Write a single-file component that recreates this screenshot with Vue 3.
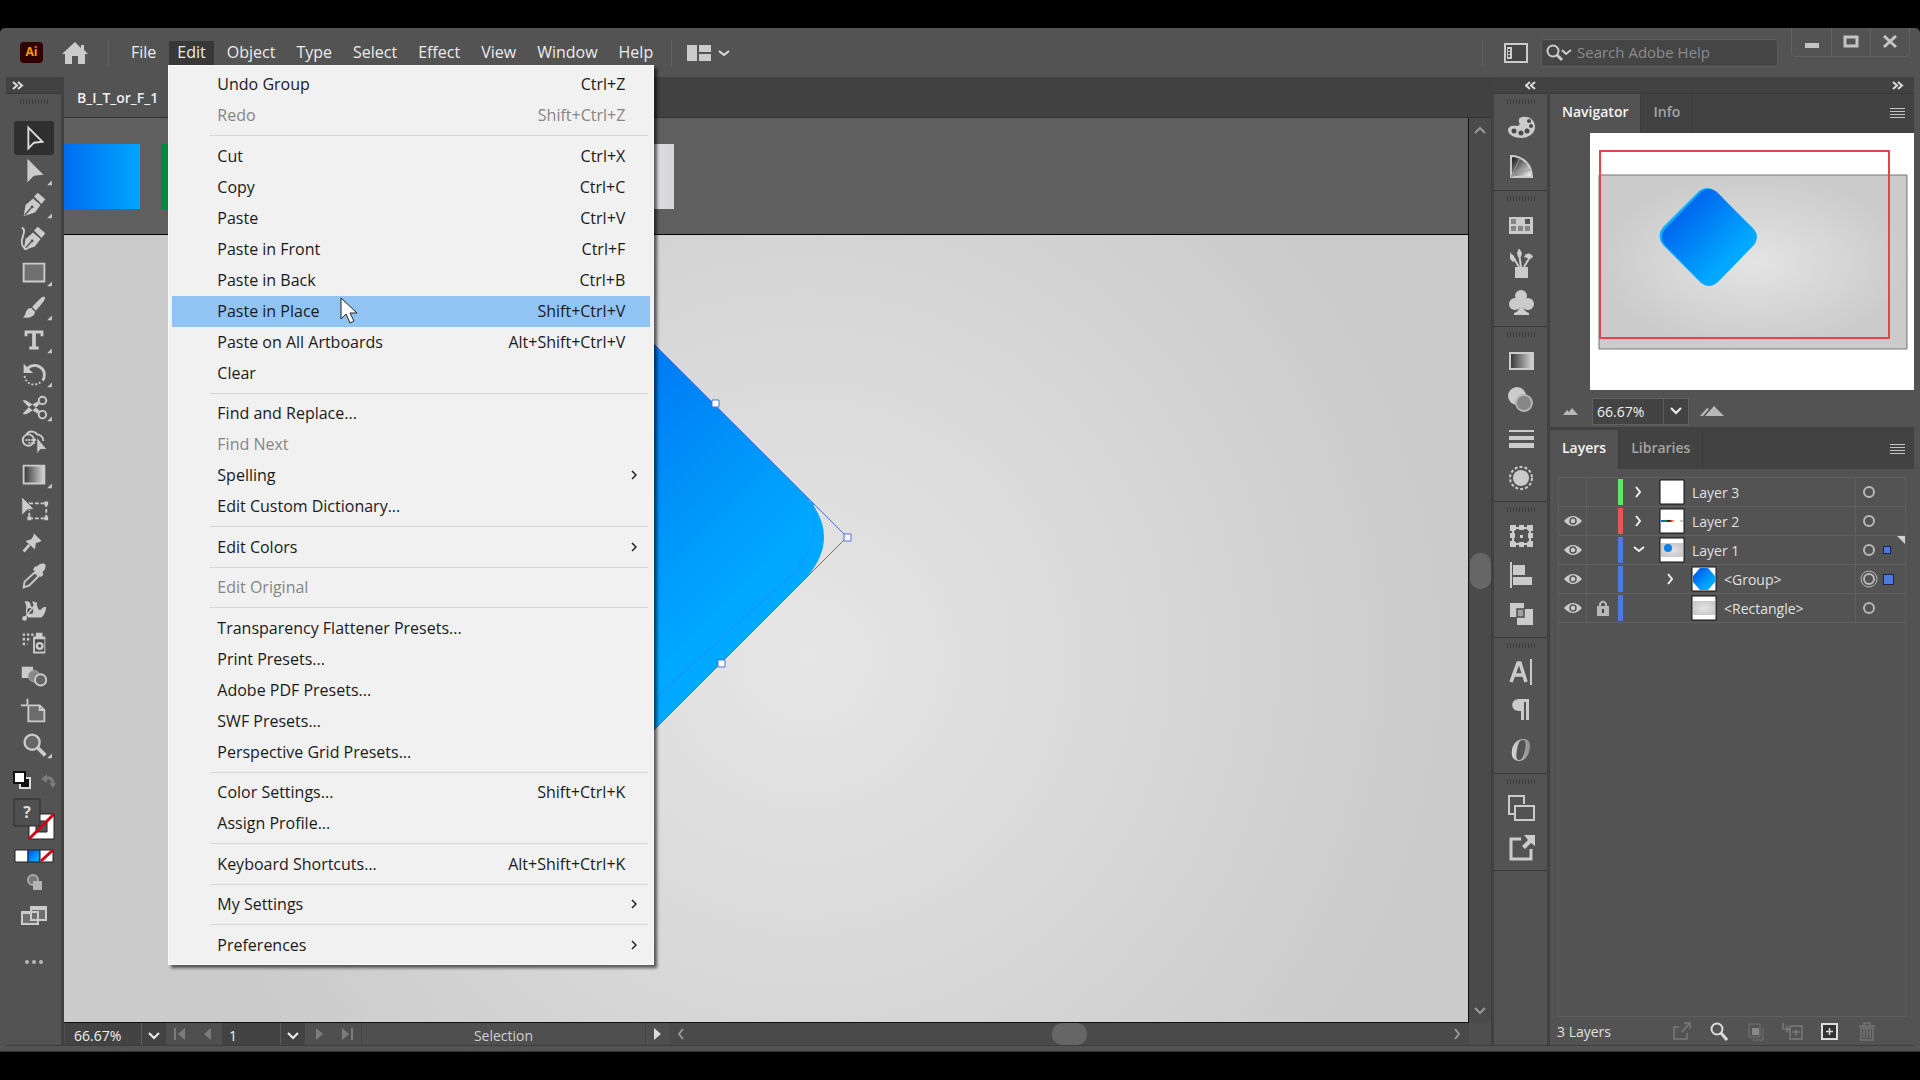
<script setup>
import { ref } from "vue";

const search = ref("");
const zoom = ref("66.67%");
const artboard = ref("1");
const activeItem = ref("Paste in Place");

const menus = ["File", "Edit", "Object", "Type", "Select", "Effect", "View", "Window", "Help"];

const editMenu = [
  { label: "Undo Group", keys: "Ctrl+Z" },
  { label: "Redo", keys: "Shift+Ctrl+Z", disabled: true },
  { divider: true },
  { label: "Cut", keys: "Ctrl+X" },
  { label: "Copy", keys: "Ctrl+C" },
  { label: "Paste", keys: "Ctrl+V" },
  { label: "Paste in Front", keys: "Ctrl+F" },
  { label: "Paste in Back", keys: "Ctrl+B" },
  { label: "Paste in Place", keys: "Shift+Ctrl+V" },
  { label: "Paste on All Artboards", keys: "Alt+Shift+Ctrl+V" },
  { label: "Clear" },
  { divider: true },
  { label: "Find and Replace..." },
  { label: "Find Next", disabled: true },
  { label: "Spelling", sub: true },
  { label: "Edit Custom Dictionary..." },
  { divider: true },
  { label: "Edit Colors", sub: true },
  { divider: true },
  { label: "Edit Original", disabled: true },
  { divider: true },
  { label: "Transparency Flattener Presets..." },
  { label: "Print Presets..." },
  { label: "Adobe PDF Presets..." },
  { label: "SWF Presets..." },
  { label: "Perspective Grid Presets..." },
  { divider: true },
  { label: "Color Settings...", keys: "Shift+Ctrl+K" },
  { label: "Assign Profile..." },
  { divider: true },
  { label: "Keyboard Shortcuts...", keys: "Alt+Shift+Ctrl+K" },
  { divider: true },
  { label: "My Settings", sub: true },
  { divider: true },
  { label: "Preferences", sub: true },
];

const nib =
  '<path d="M9 29l2-12 8-7 8 7-6 8z"/><path d="M20 8l4-4 8 7-4 5z"/><path d="M10 28l7-8" stroke="#535353" stroke-width="1.5"/><circle cx="18" cy="19" r="1.5" fill="#535353"/>';

// 40 x 34 drawings, flyout marks the tools that have hidden siblings
const tools = [
  { name: "Selection", svg: '<path d="M14 6l15 15-9 1-6 6z" fill="none" stroke="#dcdcdc" stroke-width="2"/>' },
  { name: "Direct Selection", flyout: true, svg: '<path d="M13 3l17 17-10 1-7 7z"/>' },
  { name: "Pen", flyout: true, svg: nib },
  { name: "Curvature", svg: nib + '<path d="M7 5c5 2 1 8 0 14 0 5 1 8 6 9" fill="none" stroke="#cbcbcb" stroke-width="2"/>' },
  { name: "Rectangle", flyout: true, svg: '<path d="M9 7h22v19H9z" fill="#707070" stroke="#cbcbcb" stroke-width="2"/>' },
  { name: "Paintbrush", flyout: true, svg: '<path d="M31 6c2 1 0 5-9 15l-4-4C26 8 30 5 31 6z"/><path d="M17 18l4 4c0 6-8 7-13 6 4-1 2-10 9-10z"/>' },
  { name: "Type", flyout: true, svg: '<path d="M10 7h20v6h-3v-3h-5v14h3v3H15v-3h3V10h-5v3h-3z"/>' },
  { name: "Rotate", flyout: true, svg: '<path d="M13 11c8-7 18-1 18 7 0 3-1 5-2 6" fill="none" stroke="#cbcbcb" stroke-width="3"/><path d="M9 6v10h10z"/><path d="M10 19c1 9 11 12 18 6" fill="none" stroke="#cbcbcb" stroke-width="2" stroke-dasharray="2 2"/>' },
  { name: "Scissors", flyout: true, svg: '<g fill="none" stroke="#cbcbcb" stroke-width="2"><circle cx="29" cy="9" r="4"/><circle cx="29" cy="24" r="4"/></g><path d="M8 9c3-1 6 0 18 11l-2 3C17 19 12 14 8 9zM8 23c3 2 7 0 18-10l-2-3C17 13 12 18 8 23z"/>' },
  { name: "Shape Builder", svg: '<g fill="none" stroke="#cbcbcb" stroke-width="2"><circle cx="14" cy="16" r="6"/><path d="M12 10c3-5 10-3 11 0 4 0 7 3 7 7"/></g><path d="M11 16h12M14 19h7" stroke="#cbcbcb" stroke-width="2" stroke-dasharray="2 1"/><path d="M23 13l11 13-7 0-4 5z" stroke="#535353" stroke-width="1"/>' },
  { name: "Gradient", flyout: true, svg: '<path d="M9 7h22v19H9z" fill="url(#tool-grad)" stroke="#cbcbcb" stroke-width="2"/>' },
  { name: "Free Transform", svg: '<path d="M15 11h18v16H15z" fill="none" stroke="#cbcbcb" stroke-width="2" stroke-dasharray="4 2"/><path d="M7 4l13 13-7 1-6 6z" stroke="#535353" stroke-width="1"/><path d="M13 25h4v4h-4zM31 25h4v4h-4zM31 9h4v4h-4z"/>' },
  { name: "Puppet Warp", svg: '<path d="M20 7l8 8-2 1-4 1-1 7-10-9 6-2 2-3z"/><path d="M15 19l-6 7" stroke="#cbcbcb" stroke-width="3"/>' },
  { name: "Eyedropper", svg: '<path d="M23 7c3-4 8-4 9-2s0 5-3 8l1 3-3 2-8-8 2-3z"/><path d="M21 13l4 4-10 10-6 2 1-6z" fill="#535353" stroke="#cbcbcb" stroke-width="2"/>' },
  { name: "Puppet", svg: '<path d="M10 8c8-2 6 6 8 9 2 4 3-4 0-9 6-1 5 8 8 9 3 0 2-4 7-3-1 6-2 8-5 11H14c-4-4 0-10-4-17z"/><circle cx="16" cy="18" r="4" fill="#535353" stroke="#cbcbcb" stroke-width="1.5"/><path d="M9 27L23 9" stroke="#cbcbcb" stroke-width="1.5"/><circle cx="10" cy="26" r="2.5"/>' },
  { name: "Symbol Sprayer", svg: '<path d="M22 5h7v4h3v18H19V9h3z"/><path d="M21 12h10v13H21z" fill="#4a4a4a"/><circle cx="26" cy="19" r="3" fill="none" stroke="#cbcbcb" stroke-width="2.5"/><path d="M8 7h12M8 12h9M8 17h5" stroke="#cbcbcb" stroke-width="2.5" stroke-dasharray="2.5 2"/>' },
  { name: "Blend", svg: '<path d="M7 5h12v12H7z"/><circle cx="20" cy="15" r="6" fill="#888" stroke="#a8a8a8" stroke-width="1"/><circle cx="27" cy="19" r="6" fill="#666" stroke="#cbcbcb" stroke-width="2"/>' },
  { name: "Artboard", svg: '<path d="M14 11h12l5 5v12H14z" fill="#6c6c6c" stroke="#cbcbcb" stroke-width="2"/><path d="M26 11v5h5M6 11h7M13 4v6" fill="none" stroke="#cbcbcb" stroke-width="2"/>' },
  { name: "Zoom", flyout: true, svg: '<circle cx="18" cy="14" r="8" fill="#666" stroke="#cbcbcb" stroke-width="2.5"/><path d="M24 20l8 8" stroke="#cbcbcb" stroke-width="4"/>' },
];

// 30 x 30 drawings of the collapsed panels
const dock = [
  [
    { name: "Color", svg: '<path d="M17 4c7-1 12 4 12 10S23 25 15 25C7 25 2 21 2 17s5-5 9-4c3 0 3-2 2-4-1-3 1-5 4-5z"/><g fill="#4a4a4a"><circle cx="8" cy="18" r="2.5"/><circle cx="15" cy="20" r="2.5"/><circle cx="21" cy="18" r="2.5"/><circle cx="25" cy="13" r="2"/><circle cx="23" cy="8" r="2"/></g>' },
    { name: "Color Guide", svg: '<path d="M5 4c12 0 21 9 21 21H5z" fill="url(#guide-grad)" stroke="#cbcbcb" stroke-width="2"/><path d="M5 25L14 6M5 25L21 11M5 25L26 17" stroke="#999" stroke-width="1"/>' },
  ],
  [
    { name: "Swatches", svg: '<path d="M3 7h24v17H3z"/><g fill="#868686"><path d="M5 9h5v5H5zM5 16h5v5H5zM12 16h5v5h-5zM19 16h5v5h-5z"/><path d="M19 9h5v5h-5z" fill="#555"/></g>' },
    { name: "Brushes", svg: '<path d="M9 18h13v11H9z"/><path d="M6 6l7 12M13 4l2 14M24 8l-6 10" stroke="#cbcbcb" stroke-width="2"/><path d="M4 3l6 8-3 2-3-3zM11 4l2-5 3 5-1 4h-3zM18 8c2-5 8-4 9 0l-3 2z"/>' },
    { name: "Symbols", svg: '<circle cx="15" cy="8" r="6"/><circle cx="9" cy="16" r="6"/><circle cx="22" cy="16" r="6"/><path d="M14 12h3c0 7 0 11 6 13v2H8v-2c6-2 6-6 6-13z"/>' },
  ],
  [
    { name: "Gradient", svg: '<path d="M4 7h23v16H4z" fill="url(#tool-grad)" stroke="#cbcbcb" stroke-width="2"/>' },
    { name: "Transparency", svg: '<circle cx="11" cy="11" r="9"/><circle cx="18" cy="18" r="8" fill="#868686" stroke="#b4b4b4" stroke-width="2"/>' },
    { name: "Stroke", svg: '<path d="M3 6h25v2H3zM3 12h25v4H3zM3 19h25v5H3z"/>' },
    { name: "Appearance", svg: '<circle cx="15" cy="15" r="8"/><circle cx="15" cy="15" r="11" fill="none" stroke="#cbcbcb" stroke-width="2" stroke-dasharray="3 2"/>' },
  ],
  [
    { name: "Transform", svg: '<path d="M7 7h17v16H7z" fill="none" stroke="#cbcbcb" stroke-width="2"/><path d="M4 4h6v6H4zM13 4h5v6h-5zM21 4h6v6h-6zM4 12h6v5H4zM21 12h6v5h-6zM4 20h6v6H4zM13 20h5v6h-5zM21 20h6v6h-6z"/><path d="M9 9h13v12H9z" fill="#535353"/><path d="M14 14h3v3h-3z"/>' },
    { name: "Align", svg: '<path d="M4 2h2v26H4zM7 5h12v10H7zM7 17h19v8H7z"/>' },
    { name: "Pathfinder", svg: '<path d="M4 4h14v14H4zM11 10h16v16H11z"/><path d="M11 10h7v8h-7z" fill="#a0a0a0" stroke="#4d4d4d" stroke-width="1.5"/>' },
  ],
  [
    { name: "Character", svg: '<path d="M5 25l7-19h2l6 19M9 18h9" fill="none" stroke="#cbcbcb" stroke-width="3.5"/><path d="M24 2h2v26h-2z"/>' },
    { name: "Paragraph", svg: '<path d="M22 3H13c-9 0-9 12 0 12h2v9h3V6h2v18h3V3z"/>' },
    { name: "OpenType", svg: '<path fill-rule="evenodd" d="M17 4c6 0 8 4 7 10s-5 12-11 12-8-5-7-11S11 4 17 4zm0 1c-4 0-5 5-6 10s-1 10 2 10 5-5 6-10 1-10-2-10z" fill="url(#o-grad)"/>' },
  ],
  [
    { name: "Artboards", svg: '<g fill="none" stroke="#cbcbcb" stroke-width="2"><path d="M8 21H3V3h15v8"/><path d="M9 13h19v14H9z"/></g>' },
    { name: "Asset Export", svg: '<path d="M15 7H5v20h20V17" fill="none" stroke="#cbcbcb" stroke-width="3"/><path d="M18 3h11v11l-4-3-6 6-3-3 6-6z"/>' },
  ],
];

const layers = ref([
  { name: "Layer 3", color: "green", art: "blank", arrow: "right" },
  { name: "Layer 2", color: "red", art: "swatches", arrow: "right", visible: true },
  { name: "Layer 1", color: "blue", art: "page", arrow: "down", visible: true, mark: true },
  { name: "<Group>", color: "blue", art: "group", arrow: "right", visible: true, child: true, selected: true },
  { name: "<Rectangle>", color: "blue", art: "rect", visible: true, child: true, locked: true },
]);

const layerActions = [
  { name: "Collect for export", svg: '<path d="M8 7H3v12h13v-6M11 12l7-8M13 3h6v6" fill="none" stroke="#7a7a7a" stroke-width="1.5"/>' },
  { name: "Locate object", svg: '<circle cx="9" cy="9" r="5.5" fill="none" stroke="#dcdcdc" stroke-width="2"/><path d="M13 13l6 7" stroke="#dcdcdc" stroke-width="3"/>' },
  { name: "Make clipping mask", svg: '<path d="M4 4h11v13H4zM8 20h10V8" fill="none" stroke="#747474" stroke-width="1"/><path d="M7 8h7v7H7z" fill="#8a8a8a"/>' },
  { name: "Create new sublayer", svg: '<path d="M8 6h12v13H8zM14 9v7M10 12h8M1 3v6h5M4 6l3 3-3 3" fill="none" stroke="#7a7a7a" stroke-width="1.5"/>' },
  { name: "Create new layer", svg: '<path d="M3 4h15v15H3z" fill="#333" stroke="#dcdcdc" stroke-width="2"/><path d="M10.5 8v7M7 11.5h7" stroke="#dcdcdc" stroke-width="1.5"/>' },
  { name: "Delete", svg: '<path d="M3 6h16M8 6V3h6v3M5 8h12v12H5zM8 9v9M11 9v9M14 9v9" fill="none" stroke="#747474" stroke-width="1.5"/>' },
];

const toggleLayer = (layer) => {
  layer.visible = !layer.visible;
};
</script>

<template>
  <div class="screen">
    <svg class="defs" width="0" height="0" aria-hidden="true">
      <defs>
        <linearGradient id="tool-grad"><stop offset="0" stop-color="#333" /><stop offset="1" stop-color="#d8d8d8" /></linearGradient>
        <linearGradient id="guide-grad" x1="0" y1="0" x2="1" y2="1"><stop offset="0.1" stop-color="#222" /><stop offset="1" stop-color="#fff" /></linearGradient>
        <linearGradient id="o-grad"><stop offset="0" stop-color="#d8d8d8" /><stop offset="1" stop-color="#8a8a8a" /></linearGradient>
        <linearGradient id="blue-grad" x1="0" y1="0" x2="1" y2="1"><stop offset="0.2" stop-color="#0064ee" /><stop offset="0.72" stop-color="#00a8ff" /></linearGradient>
        <radialGradient id="page-grad"><stop offset="0" stop-color="#e4e4e4" /><stop offset="1" stop-color="#cbcbcb" /></radialGradient>
      </defs>
    </svg>

    <div class="app">
      <header class="top-bar">
        <span class="logo">Ai</span>
        <button class="home" aria-label="Home">
          <svg width="28" height="24" viewBox="0 0 28 24"><path d="M14 1L1 13h3v10h7v-8h6v8h7V13h3l-4-4V4h-3v3z" fill="#cbcbcb" /></svg>
        </button>
        <span class="bar-line"></span>
        <nav class="menus">
          <div v-for="menu in menus" :key="menu" class="menu-holder">
            <button class="menu-button" :class="{ open: menu === 'Edit' }">{{ menu }}</button>
            <div v-if="menu === 'Edit'" class="menu" role="menu">
              <template v-for="(item, index) in editMenu" :key="index">
                <hr v-if="item.divider" class="divider" />
                <button
                  v-else
                  class="menu-item"
                  role="menuitem"
                  :class="{ active: item.label === activeItem }"
                  :disabled="item.disabled"
                  @mouseenter="activeItem = item.label"
                >
                  <span>{{ item.label }}</span>
                  <span v-if="item.keys" class="keys">{{ item.keys }}</span>
                  <svg v-if="item.sub" class="sub-arrow" width="6" height="10" viewBox="0 0 6 10"><path d="M1 1l4 4-4 4" fill="none" stroke="#222" stroke-width="1.5" /></svg>
                  <svg v-if="item.label === activeItem" class="cursor" width="18" height="27" viewBox="0 0 18 27">
                    <path d="M1 1v21l5-5 4 9 4-2-4-8h7z" fill="#fff" stroke="#222" stroke-width="1" />
                  </svg>
                </button>
              </template>
            </div>
          </div>
        </nav>
        <span class="bar-line"></span>
        <button class="workspace" aria-label="Arrange documents">
          <svg width="44" height="20" viewBox="0 0 44 20">
            <path d="M1 2h10v16H1zM13 2h12v7H13zM13 11h12v7H13z" fill="#cbcbcb" />
            <path d="M37 8l5 4 5-4" transform="translate(-4 0)" fill="none" stroke="#dcdcdc" stroke-width="2" />
          </svg>
        </button>
        <span class="spacer"></span>
        <span class="bar-line"></span>
        <button class="switcher" aria-label="Workspace switcher">
          <svg width="24" height="20" viewBox="0 0 24 20"><path d="M1 1h22v18H1z" fill="#454545" stroke="#cbcbcb" stroke-width="2" /><path d="M3 4h5v12H3z" fill="#cbcbcb" /><path d="M5 6v9" stroke="#444" stroke-width="2" stroke-dasharray="2 1" /></svg>
        </button>
        <label class="search">
          <svg width="28" height="20" viewBox="0 0 28 20"><circle cx="8" cy="8" r="5.5" fill="none" stroke="#cbcbcb" stroke-width="2" /><path d="M12 12l5 5" stroke="#cbcbcb" stroke-width="3" /><path d="M17 7l4 4 5-4" fill="none" stroke="#cbcbcb" stroke-width="2" /></svg>
          <input v-model="search" type="text" placeholder="Search Adobe Help" aria-label="Search Adobe Help" />
        </label>
        <div class="window-buttons">
          <button aria-label="Minimize"><svg width="16" height="14" viewBox="0 0 16 14"><path d="M1 8h14v5H1z" fill="#c4c4c4" /></svg></button>
          <button aria-label="Maximize"><svg width="16" height="14" viewBox="0 0 16 14"><path d="M2 2h12v9H2z" fill="none" stroke="#c4c4c4" stroke-width="3" /></svg></button>
          <button aria-label="Close"><svg width="16" height="14" viewBox="0 0 16 14"><path d="M2 1l12 11M14 1L2 12" stroke="#c4c4c4" stroke-width="3" /></svg></button>
        </div>
      </header>

      <main class="workspace-body">
        <aside class="toolbar">
          <button class="collapse left" aria-label="Expand tools">
            <svg width="12" height="9" viewBox="0 0 12 9"><path d="M1 1l4 3.500L1 8M6 1l4 3.500L6 8" fill="none" stroke="#dcdcdc" stroke-width="2" /></svg>
          </button>
          <span class="grip"></span>
          <div class="tools">
            <button v-for="tool in tools" :key="tool.name" class="tool" :class="{ selected: tool.name === 'Selection' }" :aria-label="tool.name">
              <svg width="40" height="32" viewBox="0 0 40 34" fill="#cbcbcb" v-html="tool.svg + (tool.flyout ? '<path d=\'M39 26v5h-5z\'/>' : '')"></svg>
            </button>
          </div>
          <button class="fills" aria-label="Fill and stroke">
            <svg width="44" height="96" viewBox="0 0 44 96">
              <path d="M8 11h10v10H8z" fill="#111" stroke="#ddd" stroke-width="2" />
              <path d="M2 5h11v11H2z" fill="#fff" stroke="#111" stroke-width="2" />
              <path d="M33 12c6-3 8 1 8 6" fill="none" stroke="#7c7c7c" stroke-width="3" /><path d="M29 12l6-5v9zM37 16h7l-3 5z" fill="#7c7c7c" />
              <path d="M17 47h25v25H17z" fill="#fff" stroke="#222" stroke-width="1" /><path d="M24 54h11v11H24z" fill="#535353" stroke="#222" stroke-width="1" />
              <path d="M17 72l25-25" stroke="#d0021b" stroke-width="3" />
              <path d="M2 32h26v27H2z" fill="#4f4f4f" stroke="#2c2c2c" stroke-width="1" />
              <text x="15" y="51" text-anchor="middle" font-size="16" font-weight="700" fill="#dcdcdc">?</text>
              <path d="M3 83h13v12H3z" fill="#fff" stroke="#222" stroke-width="1" /><path d="M16 83h12v12H16z" fill="url(#blue-grad)" stroke="#222" stroke-width="1" />
              <path d="M28 83h13v12H28z" fill="#fff" stroke="#222" stroke-width="1" /><path d="M29 94l12-11" stroke="#d0021b" stroke-width="3" />
            </svg>
          </button>
          <button class="tool mode" aria-label="Drawing mode">
            <svg width="40" height="34" viewBox="0 0 40 34"><circle cx="19" cy="15" r="5" fill="#777" stroke="#a8a8a8" stroke-width="2" /><path d="M19 16h9v9h-9z" fill="#b4b4b4" /></svg>
          </button>
          <button class="tool mode" aria-label="Screen mode">
            <svg width="40" height="34" viewBox="0 0 40 34"><path d="M8 13h16v12H8zM17 8h15v13H17z" fill="#6e6e6e" stroke="#cbcbcb" stroke-width="2" /><path d="M16 7h17v4H16zM7 12h9v3H7z" fill="#cbcbcb" /></svg>
          </button>
          <button class="tool more" aria-label="Edit toolbar">
            <svg width="40" height="34" viewBox="0 0 40 34" fill="#b8b8b8"><circle cx="13" cy="17" r="2" /><circle cx="20" cy="17" r="2" /><circle cx="27" cy="17" r="2" /></svg>
          </button>
        </aside>

        <section class="document">
          <div class="tabs"><button class="doc-tab">B_I_T_or_F_1</button></div>
          <div class="view">
            <div class="stage">
              <div class="swatch-strip">
                <span class="swatch blue"></span>
                <span class="swatch green"></span>
                <span class="swatch silver"></span>
              </div>
              <div class="artboard">
                <svg class="shape" width="900" height="787" viewBox="64 235 900 787">
                  <path d="M629 319L807 497Q841 537 807 577L629 755Q589 789 549 755L371 577Q337 537 371 497L549 319Q589 285 629 319z" fill="url(#blue-grad)" />
                  <path d="M812 502Q822 540 795 572L640 712" fill="none" stroke="#0d9dff" stroke-width="2" />
                  <path d="M589 279L847 537L589 795" fill="none" stroke="#4f6fe0" stroke-width="1" />
                  <g fill="#fff" stroke="#4f6fe0" stroke-width="1"><path d="M712 400h7v7h-7zM844 534h7v7h-7zM718 660h7v7h-7z" /></g>
                </svg>
              </div>
            </div>
            <div class="v-scroll">
              <svg width="12" height="8" viewBox="0 0 12 8"><path d="M1 7l5-5 5 5" fill="none" stroke="#999" stroke-width="2" /></svg>
              <span class="v-thumb"></span>
              <svg width="12" height="8" viewBox="0 0 12 8"><path d="M1 1l5 5 5-5" fill="none" stroke="#999" stroke-width="2" /></svg>
            </div>
          </div>
          <footer class="status">
            <input v-model="zoom" class="zoom-input" aria-label="Zoom level" />
            <button class="drop" aria-label="Zoom presets"><svg width="12" height="8" viewBox="0 0 12 8"><path d="M1 1l5 5 5-5" fill="none" stroke="#eee" stroke-width="2" /></svg></button>
            <button class="step" aria-label="First artboard"><svg width="14" height="14" viewBox="0 0 14 14"><path d="M1 1h2v12H1zM12 1v12L5 7z" fill="#7c7c7c" /></svg></button>
            <button class="step" aria-label="Previous artboard"><svg width="14" height="14" viewBox="0 0 14 14"><path d="M10 1v12L3 7z" fill="#7c7c7c" /></svg></button>
            <input v-model="artboard" class="page-input" aria-label="Artboard number" />
            <button class="drop" aria-label="Artboards"><svg width="12" height="8" viewBox="0 0 12 8"><path d="M1 1l5 5 5-5" fill="none" stroke="#eee" stroke-width="2" /></svg></button>
            <button class="step" aria-label="Next artboard"><svg width="14" height="14" viewBox="0 0 14 14"><path d="M4 1v12l7-6z" fill="#7c7c7c" /></svg></button>
            <button class="step" aria-label="Last artboard"><svg width="14" height="14" viewBox="0 0 14 14"><path d="M2 1v12l7-6zM11 1h2v12h-2z" fill="#7c7c7c" /></svg></button>
            <span class="current-tool">Selection</span>
            <button class="play" aria-label="Status options"><svg width="10" height="14" viewBox="0 0 10 14"><path d="M1 1v12l7-6z" fill="#dcdcdc" /></svg></button>
            <div class="h-scroll">
              <svg width="8" height="12" viewBox="0 0 8 12"><path d="M6 1L2 6l4 5" fill="none" stroke="#999" stroke-width="2" /></svg>
              <span class="h-thumb"></span>
              <svg width="8" height="12" viewBox="0 0 8 12"><path d="M2 1l4 5-4 5" fill="none" stroke="#999" stroke-width="2" /></svg>
            </div>
          </footer>
        </section>

        <aside class="dock">
          <button class="collapse right" aria-label="Expand panels">
            <svg width="12" height="9" viewBox="0 0 12 9"><path d="M5 1L1 4.500L5 8M10 1L6 4.500L10 8" fill="none" stroke="#dcdcdc" stroke-width="2" /></svg>
          </button>
          <div v-for="(group, index) in dock" :key="index" class="dock-group">
            <span class="grip"></span>
            <button v-for="panel in group" :key="panel.name" class="dock-button" :aria-label="panel.name">
              <svg width="30" height="30" viewBox="0 0 30 30" fill="#cbcbcb" v-html="panel.svg"></svg>
            </button>
          </div>
        </aside>

        <aside class="panels">
          <button class="collapse right" aria-label="Collapse panels">
            <svg width="12" height="9" viewBox="0 0 12 9"><path d="M1 1l4 3.500L1 8M6 1l4 3.500L6 8" fill="none" stroke="#dcdcdc" stroke-width="2" /></svg>
          </button>
          <section class="panel">
            <div class="panel-tabs">
              <button class="panel-tab active">Navigator</button>
              <button class="panel-tab">Info</button>
              <button class="panel-menu" aria-label="Navigator menu"><span class="burger"></span></button>
            </div>
            <div class="preview">
              <svg width="324" height="257" viewBox="0 0 324 257">
                <path d="M9 42h308v174H9z" fill="url(#page-grad)" stroke="#777" stroke-width="1" />
                <path d="M108 59Q117 51 126 59L163 95Q171 104 163 113L128 149Q119 157 110 149L73 112Q66 103 73 94z" fill="#10b0ff" />
                <path d="M110 60Q119 52 128 60L162 95Q170 104 162 113L128 148Q119 156 110 148L76 113Q68 104 76 95z" fill="url(#blue-grad)" />
                <path d="M10 18h289v187H10z" fill="none" stroke="#e8434a" stroke-width="2" />
              </svg>
            </div>
            <div class="nav-footer">
              <button class="mountain small" aria-label="Zoom out"><svg width="16" height="8" viewBox="0 0 16 8"><path d="M0 8l4-5 2 2 3-4 6 7z" fill="#b8b8b8" /></svg></button>
              <div class="nav-zoom">
                <input v-model="zoom" aria-label="Navigator zoom" />
                <button class="drop" aria-label="Zoom list"><svg width="12" height="8" viewBox="0 0 12 8"><path d="M1 1l5 5 5-5" fill="none" stroke="#eee" stroke-width="2" /></svg></button>
              </div>
              <button class="mountain" aria-label="Zoom in"><svg width="24" height="12" viewBox="0 0 24 12"><path d="M0 11l7-8 2 1-6 7zM5 11l9-10 10 10z" fill="#b8b8b8" /></svg></button>
            </div>
          </section>
          <section class="panel layers-panel">
            <div class="panel-tabs">
              <button class="panel-tab active">Layers</button>
              <button class="panel-tab">Libraries</button>
              <button class="panel-menu" aria-label="Layers menu"><span class="burger"></span></button>
            </div>
            <ul class="layers">
              <li v-for="layer in layers" :key="layer.name" class="layer">
                <button class="eye" :aria-label="'Visibility of ' + layer.name" @click="toggleLayer(layer)">
                  <svg v-if="layer.visible" width="18" height="12" viewBox="0 0 18 12"><path d="M0 6q9-10 18 0-9 10-18 0z" fill="#cbcbcb" /><circle cx="9" cy="6" r="3" fill="#cbcbcb" stroke="#555" stroke-width="1.5" /></svg>
                </button>
                <span class="lock"><svg v-if="layer.locked" width="14" height="16" viewBox="0 0 14 16"><path d="M4 7V4q3-5 6 0v3" fill="none" stroke="#b8b8b8" stroke-width="2" /><path d="M1 6h12v10H1z" fill="#b8b8b8" /><path d="M7 9v4" stroke="#444" stroke-width="2" /></svg></span>
                <span class="color-bar" :class="layer.color"></span>
                <span class="arrow" :class="{ nested: layer.child }">
                  <svg v-if="layer.arrow === 'right'" width="8" height="12" viewBox="0 0 8 12"><path d="M1 1l4 5-4 5" fill="none" stroke="#eee" stroke-width="2" /></svg>
                  <svg v-if="layer.arrow === 'down'" width="12" height="8" viewBox="0 0 12 8"><path d="M1 1l5 4 5-4" fill="none" stroke="#eee" stroke-width="2" /></svg>
                </span>
                <svg class="thumb" width="26" height="26" viewBox="0 0 26 26">
                  <path d="M1 1h24v24H1z" fill="#fff" stroke="#111" stroke-width="1" />
                  <g v-if="layer.art === 'swatches'"><path d="M2 12h3v2H2z" fill="#0064ee" /><path d="M5 12h3v2H5z" fill="#084" /><path d="M8 12h3v2H8z" fill="#324" /><path d="M11 12h2v2h-2z" fill="#d33" /><path d="M13 12h2v2h-2z" fill="#e94" /><path d="M21 12h3v2h-3z" fill="#ccc" /></g>
                  <path v-if="layer.art === 'page' || layer.art === 'rect'" d="M2 6h22v14H2z" fill="url(#page-grad)" />
                  <circle v-if="layer.art === 'page'" cx="9" cy="11" r="4" fill="#0a7fe8" />
                  <path v-if="layer.art === 'group'" d="M9 2h8l7 8v6l-7 8H9l-7-8v-6z" fill="url(#blue-grad)" />
                </svg>
                <span class="layer-name">{{ layer.name }}</span>
                <span class="target">
                  <svg width="18" height="18" viewBox="0 0 18 18" fill="none" stroke="#b8b8b8"><circle cx="9" cy="9" r="5" stroke-width="2" /><circle v-if="layer.selected" cx="9" cy="9" r="8" stroke-width="1" /></svg>
                  <i v-if="layer.mark || layer.selected" class="mark" :class="{ big: layer.selected }"></i>
                </span>
                <i v-if="layer.mark" class="corner"></i>
              </li>
            </ul>
            <div class="layers-footer">
              <span>3 Layers</span>
              <div class="layer-actions">
                <button v-for="action in layerActions" :key="action.name" :aria-label="action.name">
                  <svg width="22" height="22" viewBox="0 0 22 22" v-html="action.svg"></svg>
                </button>
              </div>
            </div>
          </section>
        </aside>
      </main>
    </div>
  </div>
</template>

<style>
body {
  background: #000;
}
</style>

<style scoped>
* {
  box-sizing: border-box;
}

.screen {
  min-height: 100vh;
  padding: 28px 0;
  display: flex;
  background: #000;
  color: #e0e0e0;
  font-family: "Open Sans", "Noto Sans", sans-serif;
  font-size: 14px;
}

.defs {
  position: absolute;
}

svg {
  display: block;
  flex: none;
}

button {
  display: flex;
  align-items: center;
  justify-content: center;
  padding: 0;
  border: 0;
  background: none;
  color: inherit;
  font: inherit;
}

input {
  min-width: 0;
  border: 0;
  outline: 0;
  background: none;
  color: #f0f0f0;
  font: inherit;
}

.app {
  flex: 1;
  min-width: 0;
  display: flex;
  flex-direction: column;
  padding: 0 6px 5px;
  border-radius: 5px 5px 0 0;
  border-bottom: 1px solid #333;
  background: #535353;
}

/* top bar */
.top-bar {
  height: 49px;
  display: flex;
  align-items: center;
}

.logo {
  width: 23px;
  height: 21px;
  margin-left: 14px;
  border-radius: 4px;
  background: #310000;
  color: #ff9a00;
  font-size: 12px;
  font-weight: 700;
  line-height: 20px;
  text-align: center;
}

.home {
  margin: 0 19px 0 18px;
}

.bar-line {
  width: 1px;
  height: 26px;
  background: #626262;
}

.menus {
  display: flex;
  gap: 5px;
  margin: 0 10px 0 14px;
}

.menu-holder {
  position: relative;
}

.menu-button {
  height: 24px;
  padding: 0 8px 2px;
  color: #ececec;
  font-size: 16px;
}

.menu-button.open {
  background: #383838;
}

.menu {
  position: absolute;
  z-index: 5;
  top: 24px;
  left: -1px;
  width: 486px;
  padding: 3px;
  border: 1px solid #fafafa;
  background: #f1f1f1;
  box-shadow: 3px 3px 3px rgba(0, 0, 0, 0.6);
}

.menu-item {
  position: relative;
  width: 100%;
  height: 31px;
  padding: 0 25px 0 45px;
  justify-content: flex-start;
  color: #1a1a1a;
  font-size: 16px;
  white-space: nowrap;
}

.menu-item.active {
  background: #91c4f2;
}

.menu-item:disabled {
  color: #858585;
}

.keys,
.sub-arrow {
  margin-left: auto;
}

.sub-arrow {
  margin-right: -12px;
}

.cursor {
  position: absolute;
  left: 168px;
  top: 1px;
}

.divider {
  margin: 4px 2px 4px 38px;
  border: 0;
  border-top: 1px solid #d6d6d6;
}

.divider:nth-of-type(odd) {
  margin-bottom: 5px;
}

.workspace {
  margin-left: 14px;
}

.spacer {
  flex: 1;
}

.switcher {
  margin: 0 13px 0 21px;
}

.search {
  width: 237px;
  height: 28px;
  display: flex;
  align-items: center;
  padding-left: 3px;
  gap: 4px;
  border: 1px solid #5e5e5e;
  border-radius: 3px;
  background: #454545;
}

.search input {
  flex: 1;
  padding: 0 0 2px;
  font-size: 15px;
}

.search input::placeholder {
  color: #8c8c8c;
}

.window-buttons {
  align-self: flex-start;
  display: flex;
  margin: 0 4px 0 13px;
  border: 1px solid #626262;
  border-top: 0;
  border-radius: 0 0 5px 5px;
}

.window-buttons button {
  width: 39px;
  height: 28px;
}

.window-buttons button + button {
  border-left: 1px solid #626262;
}

/* columns */
.workspace-body {
  flex: 1;
  display: grid;
  grid-template-columns: 55px minmax(0, 1fr) 53px 364px;
  gap: 3px;
  border-bottom: 1px solid #3d3d3d;
  background: #414141;
}

.collapse {
  width: 100%;
  height: 17px;
  padding: 0 10px;
  border-bottom: 1px solid #383838;
  background: #424242;
}

.collapse.left {
  justify-content: flex-start;
  padding: 0 6px;
}

.collapse.right {
  justify-content: flex-end;
}

.grip {
  width: 28px;
  height: 5px;
  background: repeating-linear-gradient(90deg, #3c3c3c 0 1px, #535353 1px 3px);
}

.toolbar {
  display: flex;
  flex-direction: column;
  align-items: center;
  background: #535353;
}

.toolbar .grip {
  margin: 5px 0 17px;
}

.tools {
  height: 641px;
  display: grid;
  grid-auto-rows: 1fr;
}

.tool {
  width: 40px;
  border-radius: 3px;
}

.tool.selected {
  background: #2f2f2f;
}

.fills {
  margin: 5px 0 2px;
}

.mode {
  height: 34px;
}

.more {
  height: 58px;
}

.document {
  display: flex;
  flex-direction: column;
}

.tabs {
  height: 41px;
  display: flex;
  border-bottom: 1px solid #333;
}

.doc-tab {
  padding: 0 13px;
  background: #535353;
  color: #f0f0f0;
  font-weight: 600;
  white-space: nowrap;
}

.view {
  flex: 1;
  display: flex;
}

.stage {
  flex: 1;
  display: flex;
  flex-direction: column;
  border-right: 1px solid #111;
}

.swatch-strip {
  height: 117px;
  display: flex;
  align-items: center;
  gap: 21px;
  padding-right: 794px;
  border-bottom: 1px solid #000;
  background: #5f5f5f;
}

.swatch {
  width: 76px;
  height: 65px;
}

.swatch.blue {
  background: linear-gradient(90deg, #006cf0, #00a6ff);
}

.swatch.green {
  background: #00883f;
}

.swatch.silver {
  margin-left: auto;
  background: linear-gradient(90deg, #f5f5f5, #d6d6da);
}

.artboard {
  position: relative;
  flex: 1;
  overflow: hidden;
  border-bottom: 1px solid #111;
  background: radial-gradient(circle 640px at 742px 423px, #e6e6e6, #cbcbcb);
}

.shape {
  position: absolute;
  left: 0;
  top: 0;
}

.v-scroll {
  width: 22px;
  display: flex;
  flex-direction: column;
  align-items: center;
  justify-content: space-between;
  padding: 8px 0;
  background: #4a4a4a;
}

.v-thumb {
  width: 21px;
  height: 36px;
  border-radius: 10px;
  background: #666;
}

.status {
  height: 22px;
  display: flex;
  background: #4f4f4f;
}

.status .zoom-input {
  width: 76px;
  margin-left: 1px;
  padding: 3px 9px 0;
  background: #434343;
}

.status .page-input {
  width: 58px;
  padding: 3px 7px 0;
  background: #434343;
}

.drop {
  width: 25px;
  border-left: 1px solid #5c5c5c;
  background: #434343;
}

.status .drop {
  padding-top: 3px;
}

.step {
  width: 28px;
}

.current-tool {
  width: 285px;
  border: solid #444;
  border-width: 0 1px;
  line-height: 26px;
  text-align: center;
  color: #cfcfcf;
}

.play {
  width: 23px;
}

.h-scroll {
  flex: 1;
  display: flex;
  align-items: center;
  justify-content: space-between;
  margin-right: 22px;
  padding: 0 8px;
  background: #4a4a4a;
}

.h-thumb {
  width: 35px;
  height: 22px;
  border-radius: 10px;
  background: #666;
}

.dock {
  background: #535353;
}

.dock-group {
  display: flex;
  flex-direction: column;
  align-items: center;
  padding: 5px 0 4px;
  border-bottom: 1px solid #393939;
}

.dock-group .grip {
  margin-bottom: 4px;
}

.dock-button {
  width: 40px;
  height: 39px;
}

/* panels */
.panels {
  display: flex;
  flex-direction: column;
}

.panel {
  background: #535353;
}

.panel-tabs {
  display: flex;
  height: 39px;
  background: #424242;
}

.panel-tab {
  padding: 0 12px 4px;
  border-right: 1px solid #3c3c3c;
  color: #a4a4a4;
  font-size: 14px;
  font-weight: 600;
}

.panel-tab.active {
  background: #535353;
  color: #f4f4f4;
}

.panel-menu {
  margin-left: auto;
  padding: 0 9px;
}

.burger {
  width: 15px;
  height: 11px;
  background: repeating-linear-gradient(#c4c4c4 0 1px, #424242 1px 3px);
}

.preview {
  width: 324px;
  margin-left: auto;
  background: #fff;
}

.nav-footer {
  height: 37px;
  display: flex;
  align-items: center;
  padding-top: 5px;
}

.mountain.small {
  width: 42px;
}

.mountain {
  width: 46px;
}

.nav-zoom {
  display: flex;
  height: 27px;
  border: 1px solid #616161;
  background: #434343;
}

.nav-zoom input {
  width: 70px;
  padding: 0 4px;
}

.layers-panel {
  flex: 1;
  display: flex;
  flex-direction: column;
  border-top: 3px solid #414141;
}

.layers {
  flex: 1;
  margin: 8px 8px 0;
  padding: 0;
  border: 1px solid #5e5e5e;
  list-style: none;
}

.layer {
  position: relative;
  display: flex;
  align-items: center;
  height: 29px;
  border-bottom: 1px solid #606060;
}

.eye {
  width: 28px;
  height: 28px;
  border-right: 1px solid #606060;
}

.lock {
  width: 31px;
  display: flex;
  justify-content: center;
}

.color-bar {
  width: 5px;
  height: 26px;
}

.color-bar.green {
  background: #5fe868;
}

.color-bar.red {
  background: #e85555;
}

.color-bar.blue {
  background: #4f78e0;
}

.arrow {
  width: 36px;
  display: flex;
  justify-content: center;
  padding-right: 4px;
}

.arrow.nested {
  width: 68px;
  padding: 0 0 0 28px;
}

.layer-name {
  flex: 1;
  padding-left: 7px;
}

.target {
  width: 50px;
  height: 28px;
  display: flex;
  align-items: center;
  gap: 5px;
  padding-left: 4px;
  border-left: 1px solid #606060;
}

.mark {
  width: 8px;
  height: 8px;
  border: 1px solid #1c2748;
  background: #4f78e0;
}

.mark.big {
  width: 11px;
  height: 11px;
}

.corner {
  position: absolute;
  top: 0;
  right: 0;
  border: 4px solid #d0d0d0;
  border-left-color: transparent;
  border-bottom-color: transparent;
}

.layers-footer {
  height: 28px;
  display: flex;
  align-items: center;
  justify-content: space-between;
  padding: 0 36px 0 7px;
}

.layer-actions {
  display: flex;
  gap: 15px;
}
</style>
